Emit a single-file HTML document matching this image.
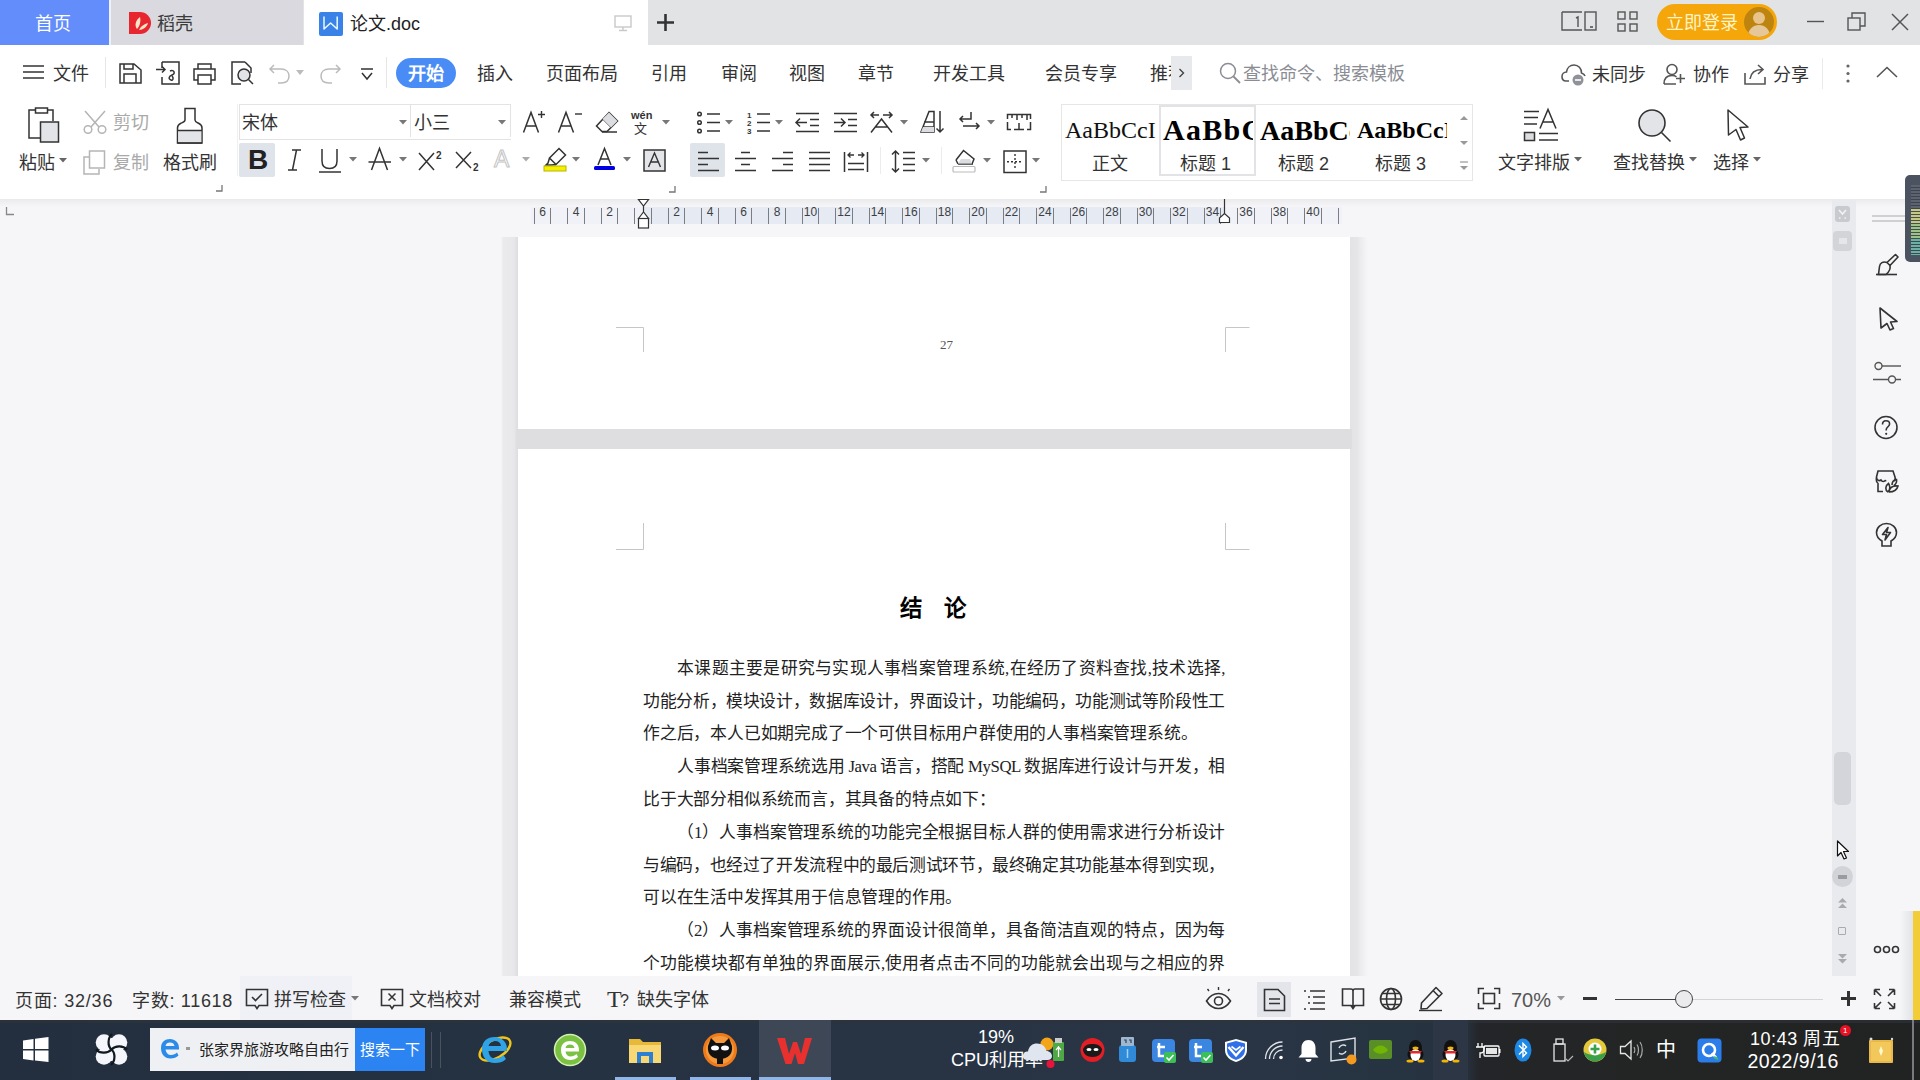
<!DOCTYPE html>
<html lang="zh-CN"><head><meta charset="utf-8">
<style>
*{box-sizing:border-box;margin:0;padding:0}
html,body{width:1920px;height:1080px;overflow:hidden;background:#f3f4f7;font-family:"Liberation Sans",sans-serif;color:#333}
.a{position:absolute}
.t{position:absolute;white-space:nowrap;line-height:1}
svg{position:absolute;overflow:visible}
.dl{position:absolute;white-space:nowrap;line-height:1;font-family:"Liberation Serif",serif;font-size:16.8px;color:#222}
</style></head><body>


<!-- TITLE BAR -->
<div class="a" style="left:0;top:0;width:1920px;height:45px;background:#e2e3e5"></div>
<div class="a" style="left:0;top:0;width:109px;height:45px;background:#628dfb"></div>
<div class="t" style="left:35px;top:15px;font-size:18px;color:#fff">首页</div>
<div class="a" style="left:109px;top:0;width:1.5px;height:45px;background:#eef2fb"></div>
<div class="a" style="left:110.5px;top:0;width:192.5px;height:45px;background:#d9d9df"></div>
<svg style="left:128px;top:11px" width="24" height="24" viewBox="0 0 24 24"><path d="M1 1 H12 A11 11 0 0 1 12 23 H1 Z" fill="#e8262f"/><path d="M9 18 C6 14 8 9 12 6 C13 10 12 15 9 18Z M11 19 C13 15 16 13 20 12 C19 16 15 19 11 19Z" fill="#fde3c8"/></svg>
<div class="t" style="left:157px;top:15px;font-size:18px;color:#3a3a3a">稻壳</div>
<div class="a" style="left:304px;top:0;width:344px;height:45px;background:#fff"></div>
<div class="a" style="left:319px;top:12px;width:24px;height:24px;background:#3b82e8;border-radius:2px"></div>
<svg style="left:319px;top:12px" width="24" height="24"><path d="M5 4.5 V17 L11.6 11 L18.2 17 V4.5" fill="none" stroke="#e8fbff" stroke-width="1.5" stroke-linejoin="round"/></svg>
<div class="t" style="left:350px;top:15px;font-size:18px;color:#222">论文.doc</div>
<svg style="left:614px;top:15px" width="18" height="17"><rect x="1" y="1" width="16" height="11" fill="none" stroke="#c8c9cc" stroke-width="1.4"/><path d="M9 12 V15 M5 15.5 H13" stroke="#c8c9cc" stroke-width="1.4"/></svg>
<svg style="left:656px;top:13px" width="19" height="19"><path d="M9.5 1 V18 M1 9.5 H18" stroke="#333" stroke-width="2.6"/></svg>
<!-- right title icons -->
<svg style="left:1561px;top:10px" width="36" height="22"><path d="M1 2 H21 M1 2 V20 H21" fill="none" stroke="#555" stroke-width="1.4"/><rect x="24" y="2" width="11" height="18" fill="none" stroke="#555" stroke-width="1.4"/><path d="M15 8 L17 7 V17" fill="none" stroke="#555" stroke-width="1.4"/><path d="M29 17 H32" stroke="#555" stroke-width="1.6"/></svg>
<svg style="left:1617px;top:11px" width="21" height="21"><rect x="1" y="1" width="7" height="7" fill="none" stroke="#555" stroke-width="1.4"/><rect x="13" y="1" width="7" height="7" fill="none" stroke="#555" stroke-width="1.4"/><rect x="1" y="13" width="7" height="7" fill="none" stroke="#555" stroke-width="1.4"/><rect x="13" y="13" width="7" height="7" fill="none" stroke="#555" stroke-width="1.4"/></svg>
<div class="a" style="left:1657px;top:4px;width:120px;height:36px;border-radius:18px;background:#f4a60b"></div>
<div class="t" style="left:1666px;top:14px;font-size:18px;color:#fff4c4">立即登录</div>
<div class="a" style="left:1744px;top:7px;width:30px;height:30px;border-radius:15px;background:#bd840f;overflow:hidden"><div class="a" style="left:9px;top:5px;width:12px;height:12px;border-radius:6px;background:#e8c48a"></div><div class="a" style="left:4px;top:18px;width:22px;height:16px;border-radius:11px 11px 0 0;background:#e6c79a"></div></div>
<svg style="left:1807px;top:20px" width="17" height="3"><path d="M0 1.5 H17" stroke="#555" stroke-width="1.4"/></svg>
<svg style="left:1847px;top:12px" width="19" height="19"><rect x="1" y="6" width="12" height="12" fill="none" stroke="#555" stroke-width="1.4"/><path d="M5 6 V1 H18 V14 H13" fill="none" stroke="#555" stroke-width="1.4"/></svg>
<svg style="left:1891px;top:13px" width="18" height="18"><path d="M1 1 L17 17 M17 1 L1 17" stroke="#555" stroke-width="1.5"/></svg>


<!-- MENU BAR -->
<div class="a" style="left:0;top:45px;width:1920px;height:154px;background:#fff"></div>
<svg style="left:23px;top:65px" width="21" height="14"><path d="M0 1 H21 M0 7 H21 M0 13 H21" stroke="#333" stroke-width="1.5" fill="none"/></svg>
<div class="t" style="left:53px;top:65px;font-size:18px;color:#333">文件</div>
<div class="a" style="left:105px;top:57px;width:1px;height:31px;background:#e6e6e6"></div>
<svg style="left:119px;top:63px" width="23" height="21"><path d="M1 1 H15 L22 7 V20 H1 Z M5 1 V6 H14 V1 M5 20 V11 H17 V20" stroke="#333" stroke-width="1.5" fill="none"/></svg>
<svg style="left:156px;top:61px" width="24" height="24"><path d="M6 1 H23 V23 H6 V16 M6 1 V7" stroke="#333" stroke-width="1.5" fill="none"/><path d="M0 8.5 H9 M6 5.5 L9 8.5 L6 11.5" stroke="#333" stroke-width="1.5" fill="none"/><path d="M14 10 C18 8 20 13 16 14 C13 15 12 18 15 19 C17 20 18 17 16 15" stroke="#333" stroke-width="1.5" fill="none"/></svg>
<svg style="left:193px;top:63px" width="23" height="22"><path d="M5 6 V1 H18 V6 M5 17 H1 V6 H22 V17 H18 M5 12 H18 V21 H5 Z" stroke="#333" stroke-width="1.5" fill="none"/></svg>
<svg style="left:231px;top:61px" width="23" height="24"><path d="M14 1 H1 V23 H10 M14 1 L20 7 V12" stroke="#333" stroke-width="1.5" fill="none"/><circle cx="13" cy="14" r="6" fill="#e2e3e7" stroke="#333" stroke-width="1.5"/><path d="M17.5 18.5 L22 23" stroke="#333" stroke-width="1.5" fill="none"/></svg>
<svg style="left:269px;top:63px" width="22" height="22"><path d="M5 2 L1 6 L5 10 M1 6 H12 C17 6 20 9 20 13 C20 18 17 20 12 20 H9" fill="none" stroke="#bbb" stroke-width="1.5"/></svg>
<svg style="left:296px;top:70px" width="8" height="5"><path d="M0 0 H8 L4 5 Z" fill="#bbb"/></svg>
<svg style="left:319px;top:63px" width="22" height="22"><path d="M17 2 L21 6 L17 10 M21 6 H10 C5 6 2 9 2 13 C2 18 5 20 10 20 H13" fill="none" stroke="#bbb" stroke-width="1.5"/></svg>
<svg style="left:360px;top:68px" width="14" height="13"><path d="M1 1 H13 M2 5 L7 11 L12 5" stroke="#333" stroke-width="1.5" fill="none"/></svg>
<div class="a" style="left:386px;top:57px;width:1px;height:31px;background:#e6e6e6"></div>
<div class="a" style="left:396px;top:58px;width:60px;height:30px;border-radius:15px;background:#4a8cf5"></div>
<div class="t" style="left:408px;top:65px;font-size:18px;color:#fff;font-weight:bold">开始</div>
<div class="t" style="left:477px;top:65px;font-size:18px;color:#333">插入</div>
<div class="t" style="left:546px;top:65px;font-size:18px;color:#333">页面布局</div>
<div class="t" style="left:651px;top:65px;font-size:18px;color:#333">引用</div>
<div class="t" style="left:721px;top:65px;font-size:18px;color:#333">审阅</div>
<div class="t" style="left:789px;top:65px;font-size:18px;color:#333">视图</div>
<div class="t" style="left:858px;top:65px;font-size:18px;color:#333">章节</div>
<div class="t" style="left:933px;top:65px;font-size:18px;color:#333">开发工具</div>
<div class="t" style="left:1045px;top:65px;font-size:18px;color:#333">会员专享</div>
<div class="a" style="left:1150px;top:62px;width:21px;height:22px;overflow:hidden"><div class="t" style="left:0;top:3px;font-size:18px;color:#333">推荐</div></div>
<div class="a" style="left:1171px;top:56px;width:21px;height:34px;background:#e8e9ec"></div>
<svg style="left:1178px;top:68px" width="7" height="10"><path d="M1.5 1 L5.5 5 L1.5 9" fill="none" stroke="#444" stroke-width="1.4"/></svg>
<svg style="left:1219px;top:62px" width="22" height="22"><circle cx="9" cy="9" r="7.5" fill="none" stroke="#8a8d94" stroke-width="1.5"/><path d="M14.5 14.5 L21 21" stroke="#8a8d94" stroke-width="1.8"/></svg>
<div class="t" style="left:1243px;top:65px;font-size:18px;color:#8a8d94">查找命令、搜索模板</div>
<svg style="left:1561px;top:63px" width="26" height="23"><path d="M8 18 H5 C2 18 1 16 1 13.5 C1 11 3 9 5.5 9 C6 5 9 2 13 2 C17.5 2 20.5 5.5 20.5 10 C22 10.5 23.5 11.5 24 13" fill="none" stroke="#555" stroke-width="1.6"/><circle cx="17" cy="17" r="5.5" fill="#8f9299"/><path d="M14 17 H20" stroke="#fff" stroke-width="1.6"/></svg>
<div class="t" style="left:1592px;top:66px;font-size:18px;color:#333">未同步</div>
<svg style="left:1663px;top:63px" width="22" height="22"><circle cx="9" cy="6.5" r="5" fill="none" stroke="#555" stroke-width="1.6"/><path d="M1 21 C1 15 4 12.5 9 12.5 C11 12.5 12.5 13 13.5 13.8 M1 21 H13" fill="none" stroke="#555" stroke-width="1.6"/><path d="M17.5 11 V20 M13 15.5 H22" stroke="#555" stroke-width="1.6"/></svg>
<div class="t" style="left:1693px;top:66px;font-size:18px;color:#333">协作</div>
<svg style="left:1744px;top:63px" width="22" height="22"><path d="M1 10 V21 H21 V14" fill="none" stroke="#555" stroke-width="1.6"/><path d="M6 16 C7 9 11 6.5 18 6.5 M14 2 L19 6.5 L14 11" fill="none" stroke="#555" stroke-width="1.6"/></svg>
<div class="t" style="left:1773px;top:66px;font-size:18px;color:#333">分享</div>
<div class="a" style="left:1822px;top:58px;width:1px;height:31px;background:#eaeaea"></div>
<svg style="left:1846px;top:64px" width="4" height="19"><circle cx="2" cy="2" r="1.6" fill="#666"/><circle cx="2" cy="9.5" r="1.6" fill="#666"/><circle cx="2" cy="17" r="1.6" fill="#666"/></svg>
<svg style="left:1876px;top:66px" width="22" height="12"><path d="M1 11 L11 1.5 L21 11" fill="none" stroke="#555" stroke-width="1.6"/></svg>


<!-- RIBBON -->
<svg style="left:27px;top:107px" width="34" height="36"><path d="M9 3 H2 V31 H13" stroke="#333" stroke-width="1.5" fill="none"/><path d="M20 3 H26 V14" stroke="#333" stroke-width="1.5" fill="none"/><rect x="8.5" y="1" width="12" height="5" stroke="#333" stroke-width="1.5" fill="none"/><rect x="13.5" y="15" width="18" height="20" fill="#e3e4e8" stroke="#333" stroke-width="1.5"/></svg>
<div class="t" style="left:19px;top:154px;font-size:18px;color:#333">粘贴</div>
<svg style="left:59px;top:158px" width="8" height="5"><path d="M0 0 H8 L4 4.5 Z" fill="#666"/></svg>
<svg style="left:82px;top:110px" width="26" height="24"><path d="M3 1 L17 17 M23 1 L9 17" stroke="#b5b5b5" stroke-width="1.5" fill="none"/><circle cx="6" cy="19.5" r="3.8" stroke="#b5b5b5" stroke-width="1.5" fill="none"/><circle cx="20" cy="19.5" r="3.8" stroke="#b5b5b5" stroke-width="1.5" fill="none"/></svg>
<div class="t" style="left:113px;top:114px;font-size:18px;color:#a9a9a9">剪切</div>
<svg style="left:83px;top:150px" width="23" height="25"><path d="M6 7 H1 V24 H16 V19" stroke="#b5b5b5" stroke-width="1.5" fill="none"/><rect x="6.5" y="1" width="15" height="17" stroke="#b5b5b5" stroke-width="1.5" fill="none"/></svg>
<div class="t" style="left:113px;top:154px;font-size:18px;color:#a9a9a9">复制</div>
<svg style="left:176px;top:107px" width="28" height="38"><path d="M9 1.5 H19 V13 C19 15 21 15.5 23 16.5 C25 17.5 26 19 26 21 V36 H1.5 V21 C1.5 19 2.5 17.5 4.5 16.5 C6.5 15.5 9 15 9 13 Z" fill="none" stroke="#333" stroke-width="1.5"/><rect x="2.25" y="24" width="23" height="11.25" fill="#e3e4e8"/><path d="M1.5 23.5 H26 M1.5 36 H26" stroke="#333" stroke-width="1.5" fill="none"/></svg>
<div class="t" style="left:163px;top:154px;font-size:18px;color:#333">格式刷</div>
<svg style="left:216px;top:185px" width="7" height="7"><path d="M6 0 V6 H0" fill="none" stroke="#777" stroke-width="1.3"/></svg>
<div class="a" style="left:237px;top:104px;width:1px;height:72px;background:#f0f0f0"></div>
<!-- font boxes -->
<div class="a" style="left:239px;top:104px;width:272px;height:36px;border:1px solid #e3e3e3;border-right:none"></div>
<div class="a" style="left:410px;top:104px;width:1px;height:33px;background:#e3e3e3"></div>
<div class="t" style="left:242px;top:114px;font-size:18px;color:#333">宋体</div>
<svg style="left:399px;top:120px" width="8" height="5"><path d="M0 0 H8 L4 4.5 Z" fill="#777"/></svg>
<div class="t" style="left:414px;top:114px;font-size:18px;color:#333">小三</div>
<svg style="left:498px;top:120px" width="8" height="5"><path d="M0 0 H8 L4 4.5 Z" fill="#777"/></svg>
<div class="a" style="left:510px;top:104px;width:1px;height:33px;background:#e3e3e3"></div>
<!-- A+ A- eraser wen -->
<svg style="left:522px;top:110px" width="24" height="24"><path d="M1.5 22.5 L9 2.5 L16.5 22.5 M4 16 H14" stroke="#333" stroke-width="1.5" fill="none"/><path d="M19.5 1 V8 M16 4.5 H23" stroke="#333" stroke-width="1.4"/></svg>
<svg style="left:557px;top:110px" width="26" height="24"><path d="M1.5 22.5 L9 2.5 L16.5 22.5 M4 16 H14" stroke="#333" stroke-width="1.5" fill="none"/><path d="M18 4 H25" stroke="#333" stroke-width="1.4"/></svg>
<svg style="left:595px;top:111px" width="24" height="23"><path d="M14 1.5 L22.5 10 L12 20.5 H7 L1.5 15 Z" stroke="#333" stroke-width="1.5" fill="none"/><path d="M8 8 L16 16" stroke="#333" stroke-width="1.5" fill="none"/><path d="M14 1.5 L22.5 10 L16 16.5 L7.5 8 Z" fill="#dcdde0"/><path d="M7 21 H22" stroke="#333" stroke-width="1.5" fill="none"/></svg>
<div class="t" style="left:631px;top:110px;font-size:11px;color:#333;font-weight:bold;letter-spacing:0">wén</div>
<div class="t" style="left:634px;top:122px;font-size:13px;color:#333">文</div>
<svg style="left:662px;top:120px" width="8" height="5"><path d="M0 0 H8 L4 4.5 Z" fill="#777"/></svg>
<!-- row2 -->
<div class="a" style="left:239px;top:143px;width:36px;height:34px;background:#dfe3ea;border-radius:2px"></div>
<div class="t" style="left:248px;top:146px;font-size:28px;color:#222;font-weight:bold">B</div>
<svg style="left:287px;top:149px" width="15" height="22"><path d="M5 1 H14 M1 21 H10 M9.5 1 L5.5 21" stroke="#333" stroke-width="1.5" fill="none"/></svg>
<svg style="left:318px;top:148px" width="25" height="25"><path d="M4 1 V13 C4 18 7 20.5 11.5 20.5 C16 20.5 19 18 19 13 V1" stroke="#333" stroke-width="1.5" fill="none"/><path d="M1 24 H23" stroke="#333" stroke-width="1.5"/></svg>
<svg style="left:349px;top:157px" width="8" height="5"><path d="M0 0 H8 L4 4.5 Z" fill="#777"/></svg>
<svg style="left:368px;top:147px" width="24" height="25"><path d="M3.5 23 L11.5 1.5 L19.5 23" stroke="#333" stroke-width="1.5" fill="none"/><path d="M0.5 15 H23" stroke="#333" stroke-width="1.5" fill="none"/></svg>
<svg style="left:399px;top:157px" width="8" height="5"><path d="M0 0 H8 L4 4.5 Z" fill="#777"/></svg>
<svg style="left:418px;top:150px" width="26" height="21"><path d="M1 3 L16 20 M16 3 L1 20" stroke="#333" stroke-width="1.5" fill="none"/><text x="18" y="9" font-size="10" font-weight="bold" fill="#333" font-family="Liberation Sans">2</text></svg>
<svg style="left:455px;top:151px" width="28" height="21"><path d="M1 1 L16 17 M16 1 L1 17" stroke="#333" stroke-width="1.5" fill="none"/><text x="18" y="20" font-size="10" font-weight="bold" fill="#333" font-family="Liberation Sans">2</text></svg>
<div class="t" style="left:494px;top:148px;font-size:23px;color:#fff;-webkit-text-stroke:1px #c4c4c4">A</div>
<svg style="left:522px;top:157px" width="8" height="5"><path d="M0 0 H8 L4 4.5 Z" fill="#aaa"/></svg>
<svg style="left:543px;top:147px" width="26" height="25"><path d="M16 1.5 L22.5 8 L13 17.5 L6.5 11 Z M6.5 11 L5 16 L3 18 H8 L13 17.5" stroke="#333" stroke-width="1.5" fill="none"/><rect x="1" y="19" width="22" height="5" fill="#f5f000" stroke="#b9b500" stroke-width="1"/></svg>
<svg style="left:572px;top:157px" width="8" height="5"><path d="M0 0 H8 L4 4.5 Z" fill="#777"/></svg>
<svg style="left:593px;top:147px" width="23" height="24"><path d="M5 18 L11.5 1.5 L18 18 M7.5 12 H15.5" stroke="#333" stroke-width="1.5" fill="none"/><rect x="1" y="19" width="21" height="4" rx="1.5" fill="#0000e0"/></svg>
<svg style="left:623px;top:157px" width="8" height="5"><path d="M0 0 H8 L4 4.5 Z" fill="#777"/></svg>
<svg style="left:643px;top:149px" width="24" height="23"><rect x="1" y="1" width="21" height="21" fill="#e4e5e8" stroke="#333" stroke-width="1.5"/><path d="M5.5 18 L11.5 4 L17.5 18 M7.5 13 H15.5" stroke="#333" stroke-width="1.4" fill="none"/></svg>
<svg style="left:669px;top:186px" width="7" height="7"><path d="M6 0 V6 H0" fill="none" stroke="#777" stroke-width="1.3"/></svg>
<!-- paragraph group -->
<svg style="left:697px;top:111px" width="25" height="23"><circle cx="2.5" cy="3" r="1.8" stroke="#333" stroke-width="1.5" fill="none"/><circle cx="2.5" cy="11.5" r="1.8" stroke="#333" stroke-width="1.5" fill="none"/><circle cx="2.5" cy="20" r="1.8" stroke="#333" stroke-width="1.5" fill="none"/><path d="M10 3 H23 M10 11.5 H23 M10 20 H23" stroke="#333" stroke-width="1.5" fill="none"/></svg>
<svg style="left:725px;top:120px" width="8" height="5"><path d="M0 0 H8 L4 4.5 Z" fill="#777"/></svg>
<svg style="left:746px;top:110px" width="26" height="24"><text x="1" y="8" font-size="8" font-weight="bold" fill="#333" font-family="Liberation Sans">1</text><text x="1" y="16" font-size="8" font-weight="bold" fill="#333" font-family="Liberation Sans">2</text><text x="1" y="24" font-size="8" font-weight="bold" fill="#333" font-family="Liberation Sans">3</text><path d="M11 4 H24 M11 12.5 H24 M11 21 H24" stroke="#333" stroke-width="1.5" fill="none"/></svg>
<svg style="left:775px;top:120px" width="8" height="5"><path d="M0 0 H8 L4 4.5 Z" fill="#777"/></svg>
<svg style="left:795px;top:112px" width="26" height="21"><path d="M1 1.5 H24 M15 7.5 H24 M15 13.5 H24 M1 19.5 H24" stroke="#333" stroke-width="1.5" fill="none"/><path d="M1 10.5 H12 M5 6.5 L1 10.5 L5 14.5" stroke="#333" stroke-width="1.5" fill="none"/></svg>
<svg style="left:833px;top:112px" width="26" height="21"><path d="M1 1.5 H24 M15 7.5 H24 M15 13.5 H24 M1 19.5 H24" stroke="#333" stroke-width="1.5" fill="none"/><path d="M1 10.5 H12 M8 6.5 L12 10.5 L8 14.5" stroke="#333" stroke-width="1.5" fill="none"/></svg>
<svg style="left:869px;top:110px" width="26" height="24"><path d="M2 5 H10 M5 2 L2 5 L5 8 M14 5 H23 M20 2 L23 5 L20 8" stroke="#333" stroke-width="1.5" fill="none"/><path d="M2 22.5 L12.5 9 L23 22.5 M6 17 H19" stroke="#333" stroke-width="1.5" fill="none"/></svg>
<svg style="left:900px;top:120px" width="8" height="5"><path d="M0 0 H8 L4 4.5 Z" fill="#777"/></svg>
<svg style="left:920px;top:110px" width="25" height="24"><path d="M1 22 L9 1.5 H14 V22 Z M4 12 H14 M3 17 H14" stroke="#333" stroke-width="1.5" fill="none"/><path d="M3 17 H14 V22 H1 Z" fill="#dcdde0"/><path d="M20 1 V22 M16.5 18.5 L20 22 L23.5 18.5" stroke="#333" stroke-width="1.5" fill="none"/></svg>
<svg style="left:958px;top:111px" width="23" height="22"><path d="M13 1 V8 H2 M5 5 L2 8 L5 11" stroke="#333" stroke-width="1.5" fill="none"/><path d="M5 15 H21 M18 12 L21 15 L18 18" stroke="#333" stroke-width="1.5" fill="none"/></svg>
<svg style="left:987px;top:120px" width="8" height="5"><path d="M0 0 H8 L4 4.5 Z" fill="#777"/></svg>
<svg style="left:1006px;top:113px" width="26" height="18"><path d="M1.5 6 V1.5 H24.5 V6 M1.5 9 V16.5 H5 M8 16.5 H18 M21 16.5 H24.5 V9 M6 1.5 V5 M11 1.5 V7 M16 1.5 V5 M21 1.5 V7 M13 10 V16.5" stroke="#333" stroke-width="1.5" fill="none"/></svg>
<!-- row2 paragraph -->
<div class="a" style="left:690px;top:143px;width:35px;height:34px;background:#dfe3ea;border-radius:2px"></div>
<svg style="left:697px;top:151px" width="23" height="22"><path d="M1 1.5 H11 M1 7.5 H22 M1 13.5 H11 M1 19.5 H22" stroke="#333" stroke-width="1.6"/></svg>
<svg style="left:734px;top:151px" width="23" height="22"><path d="M7 1.5 H16 M1 7.5 H22 M7 13.5 H16 M1 19.5 H22" stroke="#333" stroke-width="1.6"/></svg>
<svg style="left:771px;top:151px" width="23" height="22"><path d="M12 1.5 H22 M1 7.5 H22 M12 13.5 H22 M1 19.5 H22" stroke="#333" stroke-width="1.6"/></svg>
<svg style="left:808px;top:151px" width="23" height="22"><path d="M1 1.5 H22 M1 7.5 H22 M1 13.5 H22 M1 19.5 H22" stroke="#333" stroke-width="1.6"/></svg>
<svg style="left:843px;top:151px" width="26" height="22"><path d="M1.5 1 V21 M24.5 1 V21 M5 12.5 H21 M5 18.5 H21" stroke="#333" stroke-width="1.5" fill="none"/><path d="M5 4 H11 M7.5 1.5 L5 4 L7.5 6.5 M15 4 H21 M18.5 1.5 L21 4 L18.5 6.5" stroke="#333" stroke-width="1.3" fill="none"/></svg>
<div class="a" style="left:880px;top:147px;width:1px;height:27px;background:#ececec"></div>
<svg style="left:890px;top:150px" width="26" height="23"><path d="M5.5 1 V22 M2 4.5 L5.5 1 L9 4.5 M2 18.5 L5.5 22 L9 18.5" stroke="#333" stroke-width="1.5" fill="none"/><path d="M13 2.5 H25 M13 8.5 H25 M13 14.5 H25 M13 20.5 H25" stroke="#333" stroke-width="1.5" fill="none"/></svg>
<svg style="left:922px;top:158px" width="8" height="5"><path d="M0 0 H8 L4 4.5 Z" fill="#777"/></svg>
<div class="a" style="left:941px;top:147px;width:1px;height:27px;background:#ececec"></div>
<svg style="left:952px;top:149px" width="25" height="24"><path d="M4 11 L11.5 1.5 L22 10 L20 15" stroke="#333" stroke-width="1.5" fill="none"/><path d="M6 15 L4 11 M6 15 H21" stroke="#333" stroke-width="1.5" fill="none"/><path d="M6 14.5 H20 L18 10 H9 Z" fill="#dcdde0"/><rect x="1" y="17.5" width="22" height="5.5" rx="1" fill="none" stroke="#bbb" stroke-width="1.2"/></svg>
<svg style="left:983px;top:158px" width="8" height="5"><path d="M0 0 H8 L4 4.5 Z" fill="#777"/></svg>
<svg style="left:1003px;top:150px" width="24" height="23"><rect x="1" y="1" width="22" height="21.5" stroke="#333" stroke-width="1.5" fill="none"/><path d="M12 4 V19.5 M4 11.75 H20" stroke="#333" stroke-width="1.4" stroke-dasharray="2 2"/></svg>
<svg style="left:1032px;top:158px" width="8" height="5"><path d="M0 0 H8 L4 4.5 Z" fill="#777"/></svg>
<svg style="left:1040px;top:186px" width="7" height="7"><path d="M6 0 V6 H0" fill="none" stroke="#777" stroke-width="1.3"/></svg>
<!-- style gallery -->
<div class="a" style="left:1061px;top:104px;width:412px;height:77px;border:1px solid #e6e6e6"></div>
<div class="a" style="left:1159px;top:105px;width:97px;height:71px;border:2px solid #e2e3e6"></div>
<div class="a" style="left:1064px;top:113px;width:92px;height:30px;overflow:hidden"><div class="t" style="left:1px;top:5px;font-family:'Liberation Serif',serif;font-size:24px;color:#111">AaBbCcI</div></div>
<div class="t" style="left:1092px;top:155px;font-size:18px;color:#333">正文</div>
<div class="a" style="left:1162px;top:108px;width:91px;height:36px;overflow:hidden"><div class="t" style="left:1px;top:7px;font-family:'Liberation Serif',serif;font-size:30px;font-weight:bold;color:#000;letter-spacing:1.3px">AaBbCc</div></div>
<div class="t" style="left:1180px;top:155px;font-size:18px;color:#333">标题 1</div>
<div class="a" style="left:1259px;top:110px;width:91px;height:34px;overflow:hidden"><div class="t" style="left:1px;top:6.5px;font-family:'Liberation Serif',serif;font-size:28px;font-weight:bold;color:#000">AaBbCc</div></div>
<div class="t" style="left:1278px;top:155px;font-size:18px;color:#333">标题 2</div>
<div class="a" style="left:1356px;top:113px;width:91px;height:30px;overflow:hidden"><div class="t" style="left:1px;top:5px;font-family:'Liberation Serif',serif;font-size:24px;font-weight:bold;color:#000">AaBbCcI</div></div>
<div class="t" style="left:1375px;top:155px;font-size:18px;color:#333">标题 3</div>
<svg style="left:1459px;top:114px" width="10" height="60"><path d="M1 6 L5 2 L9 6 Z" fill="#999"/><path d="M1 27 L5 31 L9 27 Z" fill="#999"/><path d="M1 48 H9" stroke="#999" stroke-width="1.2"/><path d="M1 52 L5 56 L9 52 Z" fill="#999"/></svg>
<!-- right big buttons -->
<svg style="left:1522px;top:108px" width="38" height="34"><path d="M2 3.5 H17 M2 9.5 H16 M2 16 H15" stroke="#333" stroke-width="1.5" fill="none"/><path d="M18 20.5 L26 1.5 L34 20.5 M21 14 H31" stroke="#333" stroke-width="1.5" fill="none"/><rect x="2.5" y="24.5" width="10" height="8" fill="#dcdde0" stroke="#333" stroke-width="1.5"/><path d="M17 25.5 H36 M17 32 H36" stroke="#333" stroke-width="1.5" fill="none"/></svg>
<div class="t" style="left:1498px;top:154px;font-size:18px;color:#333">文字排版</div>
<svg style="left:1574px;top:157px" width="8" height="5"><path d="M0 0 H8 L4 4.5 Z" fill="#666"/></svg>
<svg style="left:1637px;top:108px" width="36" height="36"><circle cx="15" cy="15" r="13" fill="#e3e4e8" stroke="#333" stroke-width="1.6"/><path d="M24.5 24.5 L33.5 33.5" stroke="#333" stroke-width="1.6"/></svg>
<div class="t" style="left:1613px;top:154px;font-size:18px;color:#333">查找替换</div>
<svg style="left:1689px;top:157px" width="8" height="5"><path d="M0 0 H8 L4 4.5 Z" fill="#666"/></svg>
<svg style="left:1726px;top:108px" width="24" height="35"><path d="M2 2 L22 19 L14 19.5 L18.5 30 L14.5 32 L10 21.5 L2.5 27 Z" fill="none" stroke="#333" stroke-width="1.5" stroke-linejoin="round"/></svg>
<div class="t" style="left:1713px;top:154px;font-size:18px;color:#333">选择</div>
<svg style="left:1753px;top:157px" width="8" height="5"><path d="M0 0 H8 L4 4.5 Z" fill="#666"/></svg>


<!-- RULER / DOC AREA -->
<div class="a" style="left:0;top:199px;width:1920px;height:781px;background:#f6f6f8"></div>
<div class="a" style="left:0;top:199px;width:1920px;height:8px;background:linear-gradient(#eaeaed,#f6f6f8)"></div>
<svg style="left:5px;top:207px" width="9" height="9"><path d="M1.5 0 V7.5 H9" fill="none" stroke="#888" stroke-width="1.3"/></svg>
<div class="a" style="left:531px;top:207px;width:811px;height:17px;background:#f0f2f7"></div>
<div class="a" style="left:643px;top:207px;width:582px;height:17px;background:#e6eaf3"></div>
<div class="a" style="left:533.6px;top:208px;width:1px;height:16px;background:#7a7d83"></div><div class="a" style="left:550.4px;top:208px;width:1px;height:16px;background:#7a7d83"></div><div class="a" style="left:567.1px;top:208px;width:1px;height:16px;background:#7a7d83"></div><div class="a" style="left:583.9px;top:208px;width:1px;height:16px;background:#7a7d83"></div><div class="a" style="left:600.6px;top:208px;width:1px;height:16px;background:#7a7d83"></div><div class="a" style="left:617.4px;top:208px;width:1px;height:16px;background:#7a7d83"></div><div class="a" style="left:634.1px;top:208px;width:1px;height:16px;background:#7a7d83"></div><div class="a" style="left:650.9px;top:208px;width:1px;height:16px;background:#7a7d83"></div><div class="a" style="left:667.6px;top:208px;width:1px;height:16px;background:#7a7d83"></div><div class="a" style="left:684.4px;top:208px;width:1px;height:16px;background:#7a7d83"></div><div class="a" style="left:701.1px;top:208px;width:1px;height:16px;background:#7a7d83"></div><div class="a" style="left:717.9px;top:208px;width:1px;height:16px;background:#7a7d83"></div><div class="a" style="left:734.6px;top:208px;width:1px;height:16px;background:#7a7d83"></div><div class="a" style="left:751.4px;top:208px;width:1px;height:16px;background:#7a7d83"></div><div class="a" style="left:768.1px;top:208px;width:1px;height:16px;background:#7a7d83"></div><div class="a" style="left:784.9px;top:208px;width:1px;height:16px;background:#7a7d83"></div><div class="a" style="left:801.6px;top:208px;width:1px;height:16px;background:#7a7d83"></div><div class="a" style="left:818.4px;top:208px;width:1px;height:16px;background:#7a7d83"></div><div class="a" style="left:835.1px;top:208px;width:1px;height:16px;background:#7a7d83"></div><div class="a" style="left:851.9px;top:208px;width:1px;height:16px;background:#7a7d83"></div><div class="a" style="left:868.6px;top:208px;width:1px;height:16px;background:#7a7d83"></div><div class="a" style="left:885.4px;top:208px;width:1px;height:16px;background:#7a7d83"></div><div class="a" style="left:902.1px;top:208px;width:1px;height:16px;background:#7a7d83"></div><div class="a" style="left:918.9px;top:208px;width:1px;height:16px;background:#7a7d83"></div><div class="a" style="left:935.6px;top:208px;width:1px;height:16px;background:#7a7d83"></div><div class="a" style="left:952.4px;top:208px;width:1px;height:16px;background:#7a7d83"></div><div class="a" style="left:969.1px;top:208px;width:1px;height:16px;background:#7a7d83"></div><div class="a" style="left:985.9px;top:208px;width:1px;height:16px;background:#7a7d83"></div><div class="a" style="left:1002.6px;top:208px;width:1px;height:16px;background:#7a7d83"></div><div class="a" style="left:1019.4px;top:208px;width:1px;height:16px;background:#7a7d83"></div><div class="a" style="left:1036.1px;top:208px;width:1px;height:16px;background:#7a7d83"></div><div class="a" style="left:1052.9px;top:208px;width:1px;height:16px;background:#7a7d83"></div><div class="a" style="left:1069.6px;top:208px;width:1px;height:16px;background:#7a7d83"></div><div class="a" style="left:1086.4px;top:208px;width:1px;height:16px;background:#7a7d83"></div><div class="a" style="left:1103.1px;top:208px;width:1px;height:16px;background:#7a7d83"></div><div class="a" style="left:1119.9px;top:208px;width:1px;height:16px;background:#7a7d83"></div><div class="a" style="left:1136.6px;top:208px;width:1px;height:16px;background:#7a7d83"></div><div class="a" style="left:1153.4px;top:208px;width:1px;height:16px;background:#7a7d83"></div><div class="a" style="left:1170.1px;top:208px;width:1px;height:16px;background:#7a7d83"></div><div class="a" style="left:1186.9px;top:208px;width:1px;height:16px;background:#7a7d83"></div><div class="a" style="left:1203.6px;top:208px;width:1px;height:16px;background:#7a7d83"></div><div class="a" style="left:1220.4px;top:208px;width:1px;height:16px;background:#7a7d83"></div><div class="a" style="left:1237.1px;top:208px;width:1px;height:16px;background:#7a7d83"></div><div class="a" style="left:1253.9px;top:208px;width:1px;height:16px;background:#7a7d83"></div><div class="a" style="left:1270.6px;top:208px;width:1px;height:16px;background:#7a7d83"></div><div class="a" style="left:1287.4px;top:208px;width:1px;height:16px;background:#7a7d83"></div><div class="a" style="left:1304.1px;top:208px;width:1px;height:16px;background:#7a7d83"></div><div class="a" style="left:1320.9px;top:208px;width:1px;height:16px;background:#7a7d83"></div><div class="a" style="left:1337.6px;top:208px;width:1px;height:16px;background:#7a7d83"></div>
<div class="t" style="left:512.5px;width:60px;text-align:center;top:206px;font-size:12px;color:#3c3f44">6</div><div class="t" style="left:546.0px;width:60px;text-align:center;top:206px;font-size:12px;color:#3c3f44">4</div><div class="t" style="left:579.5px;width:60px;text-align:center;top:206px;font-size:12px;color:#3c3f44">2</div><div class="t" style="left:646.5px;width:60px;text-align:center;top:206px;font-size:12px;color:#3c3f44">2</div><div class="t" style="left:680.0px;width:60px;text-align:center;top:206px;font-size:12px;color:#3c3f44">4</div><div class="t" style="left:713.5px;width:60px;text-align:center;top:206px;font-size:12px;color:#3c3f44">6</div><div class="t" style="left:747.0px;width:60px;text-align:center;top:206px;font-size:12px;color:#3c3f44">8</div><div class="t" style="left:780.5px;width:60px;text-align:center;top:206px;font-size:12px;color:#3c3f44">10</div><div class="t" style="left:814.0px;width:60px;text-align:center;top:206px;font-size:12px;color:#3c3f44">12</div><div class="t" style="left:847.5px;width:60px;text-align:center;top:206px;font-size:12px;color:#3c3f44">14</div><div class="t" style="left:881.0px;width:60px;text-align:center;top:206px;font-size:12px;color:#3c3f44">16</div><div class="t" style="left:914.5px;width:60px;text-align:center;top:206px;font-size:12px;color:#3c3f44">18</div><div class="t" style="left:948.0px;width:60px;text-align:center;top:206px;font-size:12px;color:#3c3f44">20</div><div class="t" style="left:981.5px;width:60px;text-align:center;top:206px;font-size:12px;color:#3c3f44">22</div><div class="t" style="left:1015.0px;width:60px;text-align:center;top:206px;font-size:12px;color:#3c3f44">24</div><div class="t" style="left:1048.5px;width:60px;text-align:center;top:206px;font-size:12px;color:#3c3f44">26</div><div class="t" style="left:1082.0px;width:60px;text-align:center;top:206px;font-size:12px;color:#3c3f44">28</div><div class="t" style="left:1115.5px;width:60px;text-align:center;top:206px;font-size:12px;color:#3c3f44">30</div><div class="t" style="left:1149.0px;width:60px;text-align:center;top:206px;font-size:12px;color:#3c3f44">32</div><div class="t" style="left:1182.5px;width:60px;text-align:center;top:206px;font-size:12px;color:#3c3f44">34</div><div class="t" style="left:1216.0px;width:60px;text-align:center;top:206px;font-size:12px;color:#3c3f44">36</div><div class="t" style="left:1249.5px;width:60px;text-align:center;top:206px;font-size:12px;color:#3c3f44">38</div><div class="t" style="left:1283.0px;width:60px;text-align:center;top:206px;font-size:12px;color:#3c3f44">40</div>
<svg style="left:636px;top:198px" width="16" height="33"><path d="M2.5 1.5 H12.5 L7.5 8 Z M7.5 8 V14 M2.5 20.5 L7.5 14 L12.5 20.5 Z" fill="#fff" stroke="#333" stroke-width="1.2"/><rect x="2.5" y="20.5" width="10" height="9.5" fill="#fff" stroke="#333" stroke-width="1.2"/></svg>
<svg style="left:1218px;top:199px" width="14" height="26"><path d="M6.5 0 V15" stroke="#333" stroke-width="1.2"/><path d="M1.5 23.5 V19 L6.5 14.5 L11.5 19 V23.5 Z" fill="#fff" stroke="#333" stroke-width="1.2"/></svg>

<!-- PAGES -->
<div class="a" style="left:501px;top:237px;width:17px;height:740px;background:linear-gradient(90deg,#f4f4f6,#eaeaed 15%,#e8e8eb 75%,#dcdde0)"></div>
<div class="a" style="left:1350px;top:237px;width:18px;height:740px;background:linear-gradient(90deg,#e3e3e6,#e6e6e9 40%,#f0f0f3 75%,#f6f6f8)"></div>
<div class="a" style="left:518px;top:237px;width:832px;height:192px;background:#fff"></div>
<div class="a" style="left:516px;top:429px;width:836px;height:20px;background:#dedee0"></div>
<div class="a" style="left:518px;top:449px;width:832px;height:530px;background:#fff"></div>
<svg style="left:615px;top:326px" width="640" height="28"><path d="M1 1.5 H28.5 V26 M634.5 1.5 H610.5 V26" fill="none" stroke="#c6c6c6" stroke-width="1"/></svg>
<div class="t" style="left:940px;top:338px;font-family:'Liberation Serif',serif;font-size:13px;color:#555">27</div>
<svg style="left:615px;top:522px" width="640" height="28"><path d="M1 27.5 H28.5 V1 M634.5 27.5 H610.5 V1" fill="none" stroke="#c6c6c6" stroke-width="1"/></svg>
<!-- DOC TEXT -->
<div class="t" style="left:900px;top:598px;font-family:'Liberation Sans',sans-serif;font-size:22.4px;font-weight:bold;color:#000">结　论</div>
<div class="dl" style="left:677px;top:660.8px;width:548px;text-align:justify;text-align-last:justify;letter-spacing:-0.45px">本课题主要是研究与实现人事档案管理系统,在经历了资料查找,技术选择,</div>
<div class="dl" style="left:643px;top:693.6px;width:582px;text-align:justify;text-align-last:justify;letter-spacing:-0.45px">功能分析，模块设计，数据库设计，界面设计，功能编码，功能测试等阶段性工</div>
<div class="dl" style="left:643px;top:726.4px;width:582px;letter-spacing:-0.2px">作之后，本人已如期完成了一个可供目标用户群使用的人事档案管理系统。</div>
<div class="dl" style="left:677px;top:759.2px;width:548px;text-align:justify;text-align-last:justify;letter-spacing:-0.45px">人事档案管理系统选用 Java 语言，搭配 MySQL 数据库进行设计与开发，相</div>
<div class="dl" style="left:643px;top:792.0px;width:582px;letter-spacing:-0.2px">比于大部分相似系统而言，其具备的特点如下：</div>
<div class="dl" style="left:677px;top:824.8px;width:548px;text-align:justify;text-align-last:justify;letter-spacing:-0.45px">（1）人事档案管理系统的功能完全根据目标人群的使用需求进行分析设计</div>
<div class="dl" style="left:643px;top:857.6px;width:582px;text-align:justify;text-align-last:justify;letter-spacing:-0.45px">与编码，也经过了开发流程中的最后测试环节，最终确定其功能基本得到实现，</div>
<div class="dl" style="left:643px;top:890.4px;width:582px;letter-spacing:-0.2px">可以在生活中发挥其用于信息管理的作用。</div>
<div class="dl" style="left:677px;top:923.2px;width:548px;text-align:justify;text-align-last:justify;letter-spacing:-0.45px">（2）人事档案管理系统的界面设计很简单，具备简洁直观的特点，因为每</div>
<div class="dl" style="left:643px;top:956.0px;width:582px;text-align:justify;text-align-last:justify;letter-spacing:-0.45px">个功能模块都有单独的界面展示,使用者点击不同的功能就会出现与之相应的界</div>


<!-- SIDEBAR -->
<div class="a" style="left:1832px;top:199px;width:24px;height:777px;background:#e9eaee"></div>
<div class="a" style="left:1835px;top:206px;width:15px;height:16px;border-radius:3px;background:#c9cacf"></div>
<svg style="left:1835px;top:206px" width="15" height="16"><path d="M4 4 L7.5 8 L11 4 M4 12 H5.5 M9.5 12 H11" stroke="#f2f2f2" stroke-width="1.6" fill="none"/></svg>
<div class="a" style="left:1833px;top:231px;width:19px;height:20px;border-radius:4px;background:#d3d4d8"></div>
<div class="a" style="left:1839px;top:238px;width:8px;height:6px;background:#e6e6ea"></div>
<div class="a" style="left:1834px;top:752px;width:17px;height:53px;border-radius:5px;background:#d4d5da"></div>
<div class="a" style="left:1832px;top:866px;width:21px;height:21px;border-radius:11px;background:#d2d3d8"></div>
<div class="a" style="left:1838px;top:875px;width:9px;height:4px;background:#9a9ba0"></div>
<svg style="left:1837px;top:897px" width="11" height="12"><path d="M1 5.5 L5.5 1 L10 5.5 Z M1 11 L5.5 6.5 L10 11 Z" fill="#a9aaae"/></svg>
<div class="a" style="left:1838px;top:927px;width:8px;height:8px;border:1.3px solid #a9aaae;border-radius:1px"></div>
<svg style="left:1837px;top:953px" width="11" height="11"><path d="M1 1 L5.5 5.5 L10 1 Z M1 6 L5.5 10.5 L10 6 Z" fill="#a9aaae"/></svg>
<svg style="left:1836px;top:840px" width="14" height="20"><path d="M1.5 1 V16 L5 12.5 L8 19 L10.5 18 L7.5 11.5 H12.5 Z" fill="#fff" stroke="#111" stroke-width="1.2" stroke-linejoin="round"/></svg>
<!-- right tool sidebar -->
<div class="a" style="left:1872px;top:215px;width:33px;height:1.5px;background:#cfd0d3"></div>
<div class="a" style="left:1872px;top:220px;width:33px;height:1.5px;background:#cfd0d3"></div>
<div class="a" style="left:1905px;top:175px;width:15px;height:87px;border-radius:5px 0 0 5px;background:#4b5260"></div>
<div class="a" style="left:1911px;top:185px;width:9px;height:70px;background:repeating-linear-gradient(#5d6470 0 1.6px,#3f4550 1.6px 3px)"></div>
<div class="a" style="left:1911px;top:209px;width:9px;height:15px;background:repeating-linear-gradient(#c3c985 0 1.6px,#4a4f4a 1.6px 3px)"></div>
<div class="a" style="left:1911px;top:224px;width:9px;height:15px;background:repeating-linear-gradient(#9ec18a 0 1.6px,#42504a 1.6px 3px)"></div>
<div class="a" style="left:1911px;top:239px;width:9px;height:16px;background:repeating-linear-gradient(#6bb0a6 0 1.6px,#3b4b4f 1.6px 3px)"></div>
<svg style="left:1875px;top:253px" width="24" height="24"><path d="M12 9.5 L20.5 1.5 L23 4 L15 12.5 Z" stroke="#333" stroke-width="1.6" fill="none" stroke-linejoin="round"/><path d="M12 9.5 C8 8 5 10 4.5 13.5 L3.5 21.5 H11 C14 19 15.5 15 15 12.5" stroke="#333" stroke-width="1.6" fill="none"/><path d="M1 21.5 H22" stroke="#333" stroke-width="1.6" fill="none"/></svg>
<svg style="left:1878px;top:306px" width="21" height="26"><path d="M2 2 L19 15.5 L12.5 16 L15.5 22.5 L12 24 L9 17.5 L3 22 Z" stroke="#333" stroke-width="1.6" fill="none" stroke-linejoin="round"/></svg>
<svg style="left:1872px;top:360px" width="30" height="26"><path d="M10 6 H29" stroke="#555" stroke-width="1.4"/><circle cx="6.5" cy="6" r="3.5" fill="#f5f6f8" stroke="#555" stroke-width="1.4"/><path d="M1 19.5 H16 M23.5 19.5 H29" stroke="#555" stroke-width="1.4"/><circle cx="20" cy="19.5" r="3.5" fill="#f5f6f8" stroke="#555" stroke-width="1.4"/></svg>
<svg style="left:1874px;top:415px" width="24" height="25"><circle cx="12" cy="12.5" r="11" stroke="#333" stroke-width="1.6" fill="none"/><path d="M8.5 9.5 C8.5 7 10 5.8 12 5.8 C14 5.8 15.6 7 15.6 9 C15.6 11.5 12.2 12 12.2 14.8 V15.5" stroke="#333" stroke-width="1.6" fill="none"/><circle cx="12.2" cy="18.8" r="1.1" fill="#333"/></svg>
<svg style="left:1875px;top:469px" width="25" height="25"><path d="M3 14 V22.5 H8 M3 14 C1 13 1 11 1.5 8 L3 2 H18 L20 8 C20.5 10 20 11.5 19 12 M1.5 8 C1.5 11 4 12.5 6 11 C7 13 9.5 13 10.5 11 V12.5" stroke="#333" stroke-width="1.6" fill="none"/><path d="M13 23 C10 21 10 17 13.5 14.5 C15.5 17.5 15.5 20 13 23 M14 23 C14.5 19 17.5 16.5 23 17 C22 21 18.5 23 14 23 M17 16 C17 13 19 11 21.5 10.5 C22 13 21 15 19 16.5" stroke="#333" stroke-width="1.6" fill="none"/></svg>
<svg style="left:1875px;top:522px" width="24" height="26"><path d="M7 19 C3.5 17 1.5 14 1.5 10.5 C1.5 5.5 6 1.5 11.5 1.5 C17 1.5 21.5 5.5 21.5 10.5 C21.5 14 19.5 17 16 19 V24 H7 Z" stroke="#333" stroke-width="1.6" fill="none"/><path d="M13 5.5 L7.5 12.5 H11.5 L10 18 L15.5 10.5 H11.5 Z" stroke="#333" stroke-width="1.6" fill="none" stroke-linejoin="round"/></svg>
<svg style="left:1873px;top:945px" width="27" height="9"><circle cx="4.5" cy="4.5" r="3" stroke="#333" stroke-width="1.6" fill="none"/><circle cx="13.5" cy="4.5" r="3" stroke="#333" stroke-width="1.6" fill="none"/><circle cx="22.5" cy="4.5" r="3" stroke="#333" stroke-width="1.6" fill="none"/></svg>


<!-- STATUS BAR -->
<div class="a" style="left:0;top:976px;width:1920px;height:44px;background:#f6f6f8"></div>
<div class="t" style="left:15px;top:992px;font-size:18px;color:#333;letter-spacing:0.8px">页面: 32/36</div>
<div class="t" style="left:132px;top:992px;font-size:18px;color:#333;letter-spacing:0.7px">字数: 11618</div>
<div class="a" style="left:240px;top:976px;width:112px;height:44px;background:#eff1f6"></div>
<svg style="left:245px;top:988px" width="24" height="22"><path d="M1.5 1.5 H22.5 V17.5 H14 L12 20.5 L10 17.5 H1.5 Z" stroke="#333" stroke-width="1.6" fill="none"/><path d="M7 9 L10.5 12.5 L17 6" stroke="#333" stroke-width="1.6" fill="none"/></svg>
<div class="t" style="left:274px;top:991px;font-size:18px;color:#333">拼写检查</div>
<svg style="left:351px;top:996px" width="8" height="5"><path d="M0 0 H8 L4 4.5 Z" fill="#777"/></svg>
<svg style="left:380px;top:988px" width="24" height="22"><path d="M1.5 1.5 H22.5 V17.5 H14 L12 20.5 L10 17.5 H1.5 Z" stroke="#333" stroke-width="1.6" fill="none"/><path d="M8.5 5.5 L15.5 12.5 M15.5 5.5 L8.5 12.5" stroke="#333" stroke-width="1.5"/></svg>
<div class="t" style="left:409px;top:991px;font-size:18px;color:#333">文档校对</div>
<div class="t" style="left:509px;top:991px;font-size:18px;color:#333">兼容模式</div>
<div class="t" style="left:607px;top:987px;font-family:'Liberation Serif',serif;font-size:24px;color:#333">T</div>
<div class="t" style="left:620px;top:993px;font-size:16px;color:#333">?</div>
<div class="t" style="left:637px;top:991px;font-size:18px;color:#333">缺失字体</div>
<svg style="left:1205px;top:986px" width="27" height="24"><path d="M4 5 L2.5 3 M13.5 4 V1 M23 5 L24.5 3" stroke="#333" stroke-width="1.4"/><path d="M1.5 15 C5 9.5 9 7.5 13.5 7.5 C18 7.5 22 9.5 25.5 15 C22 20.5 18 22.5 13.5 22.5 C9 22.5 5 20.5 1.5 15 Z" stroke="#333" stroke-width="1.6" fill="none"/><circle cx="13.5" cy="15" r="4" stroke="#333" stroke-width="1.6" fill="none"/></svg>
<div class="a" style="left:1257px;top:982px;width:34px;height:35px;background:#e3e5ea"></div>
<svg style="left:1263px;top:988px" width="23" height="24"><path d="M1.5 1.5 H15 L21.5 8 V22.5 H1.5 Z" stroke="#333" stroke-width="1.6" fill="none"/><path d="M6 11 H17 M6 15.5 H17" stroke="#333" stroke-width="1.6" fill="none"/></svg>
<svg style="left:1303px;top:989px" width="23" height="22"><path d="M1 2 H3 M7 2 H22 M5 8 H7 M10 8 H22 M5 14 H7 M10 14 H22 M1 20 H3 M7 20 H22" stroke="#333" stroke-width="1.6"/></svg>
<svg style="left:1341px;top:987px" width="24" height="25"><path d="M1.5 2 H10 C11 2 12 3 12 4 V20 C12 19 11 18.5 10 18.5 H1.5 Z M22.5 2 H14 C13 2 12 3 12 4 V20 C12 19 13 18.5 14 18.5 H22.5 Z" stroke="#333" stroke-width="1.6" fill="none"/><path d="M10 18.5 L12 21.5 L14 18.5" stroke="#333" stroke-width="1.6" fill="none"/></svg>
<svg style="left:1379px;top:987px" width="24" height="24"><circle cx="12" cy="12" r="10.5" stroke="#333" stroke-width="1.6" fill="none"/><ellipse cx="12" cy="12" rx="4.5" ry="10.5" stroke="#333" stroke-width="1.6" fill="none"/><path d="M1.5 12 H22.5 M3 6.5 H21 M3 17.5 H21" stroke="#333" stroke-width="1.4"/></svg>
<svg style="left:1418px;top:986px" width="26" height="26"><path d="M18 1.5 L24 7.5 L9 22.5 L3 23 L3.5 17 Z M15 4.5 L21 10.5" stroke="#333" stroke-width="1.6" fill="none" stroke-linejoin="round"/><path d="M1 24.5 H24" stroke="#333" stroke-width="1.4"/></svg>
<svg style="left:1477px;top:987px" width="24" height="23"><path d="M1.5 7 V1.5 H7 M17 1.5 H22.5 V7 M22.5 16 V21.5 H17 M7 21.5 H1.5 V16" stroke="#333" stroke-width="1.6" fill="none"/><rect x="6.5" y="6.5" width="11" height="10" stroke="#333" stroke-width="1.6" fill="none"/></svg>
<div class="t" style="left:1511px;top:990px;font-size:20px;color:#555">70%</div>
<svg style="left:1557px;top:996px" width="8" height="5"><path d="M0 0 H8 L4 4.5 Z" fill="#999"/></svg>
<div class="a" style="left:1583px;top:997px;width:14px;height:3px;background:#333"></div>
<div class="a" style="left:1615px;top:998.5px;width:70px;height:1.5px;background:#444"></div>
<div class="a" style="left:1685px;top:998.5px;width:138px;height:1.5px;background:#d3d4d7"></div>
<div class="a" style="left:1675px;top:990px;width:18px;height:18px;border-radius:9px;background:#ebebee;border:1.5px solid #444"></div>
<div class="a" style="left:1841px;top:997px;width:14.5px;height:3px;background:#333"></div>
<div class="a" style="left:1846.75px;top:991px;width:3px;height:15px;background:#333"></div>
<svg style="left:1873px;top:988px" width="23" height="22"><path d="M1.5 1.5 L8 8 M1.5 1.5 H7 M1.5 1.5 V7 M21.5 1.5 L15 8 M21.5 1.5 H16 M21.5 1.5 V7 M1.5 20.5 L8 14 M1.5 20.5 H7 M1.5 20.5 V15 M21.5 20.5 L15 14 M21.5 20.5 H16 M21.5 20.5 V15" stroke="#333" stroke-width="1.6" fill="none"/></svg>

<div class="a" style="left:1900px;top:911px;width:13px;height:109px;background:linear-gradient(90deg,#f5f6f8,#e2e3e6)"></div>
<div class="a" style="left:1913px;top:911px;width:7px;height:109px;background:#f3cd38"></div>
<!-- TASKBAR -->
<div class="a" style="left:0;top:1020px;width:1920px;height:60px;background:linear-gradient(90deg,#232f3e 0,#253241 545px,#283344 900px,#293545 1250px,#263340 1400px,#27313e 1466px,#232528 1480px,#232524 1690px,#212222 1920px)"></div>
<div class="a" style="left:0;top:1020px;width:1920px;height:3px;background:#2e333a;opacity:.6"></div>
<svg style="left:23px;top:1037px" width="26" height="26"><path d="M0 3.5 L10.5 2 V12 H0 Z M12 1.8 L25.5 0 V12 H12 Z M0 13.5 H10.5 V23.5 L0 22 Z M12 13.5 H25.5 V25 L12 23.5 Z" fill="#fff"/></svg>
<svg style="left:95px;top:1033px" width="33" height="33"><g fill="#f4f6fb"><circle cx="9" cy="9.5" r="8.3"/><circle cx="24" cy="9.5" r="8.3"/><circle cx="9" cy="23.5" r="8.3"/><circle cx="24" cy="23.5" r="8.3"/><rect x="5" y="5" width="23" height="23"/></g><path d="M16.5 16.5 C12.5 13 12.5 5 17 1 M16.5 16.5 C20 12.5 28 12 32 16.5 M16.5 16.5 C20.5 20 20.5 28 16 32 M16.5 16.5 C13 20.5 5 21 1 16.5" fill="none" stroke="#111820" stroke-width="2.2"/></svg>
<div class="a" style="left:150px;top:1028px;width:205px;height:43px;background:#eef0f3"></div>
<div class="a" style="left:355px;top:1028px;width:70px;height:43px;background:#2b84f2"></div>
<svg style="left:158px;top:1036px" width="24" height="24"><path d="M3 12 C3 6 7 3 12 3 C17 3 21 6.5 21 12 V13.5 H7.5 C8 17 10 19 13 19 C15.5 19 17.5 18 19 16.5 L20.5 19.5 C18.5 21.5 16 22.5 12.5 22.5 C6.5 22.5 3 18 3 12 Z M7.5 10 H16.5 C16 7.5 14.5 6.5 12 6.5 C9.5 6.5 8 7.5 7.5 10 Z" fill="#2a8ce8"/></svg>
<div class="a" style="left:186px;top:1047px;width:4px;height:3px;background:#999"></div>
<div class="t" style="left:199px;top:1042px;font-size:15px;color:#222">张家界旅游攻略自由行</div>
<div class="t" style="left:360px;top:1042px;font-size:15px;color:#fff">搜索一下</div>
<div class="a" style="left:431px;top:1032px;width:1px;height:36px;background:#4a525e"></div>
<div class="a" style="left:440px;top:1032px;width:1px;height:36px;background:#4a525e"></div>
<!-- IE -->
<svg style="left:476px;top:1032px" width="38" height="35"><ellipse cx="19" cy="17" rx="17" ry="9" transform="rotate(-30 19 17)" fill="none" stroke="#f0c419" stroke-width="2.4"/><path d="M6 17 C6 9 11.5 5 18.5 5 C26 5 31 10 31 17 V19 H12.5 C13 24 15.5 26.5 19.5 26.5 C23 26.5 25.5 25 27.5 23 L30 27 C27 30 23.5 31 19 31 C10.5 31 6 25 6 17 Z M12.5 14 H25 C24.5 10.5 22.5 9 19 9 C15.5 9 13.5 10.5 12.5 14 Z" fill="#2fa3e6"/></svg>
<!-- 360 browser -->
<svg style="left:553px;top:1033px" width="34" height="34"><circle cx="17" cy="17" r="15.5" fill="#7cc242" stroke="#d5f0b5" stroke-width="1.5"/><path d="M8 17 C8 11 12 8 17 8 C22 8 26 11 26 17 V18.5 H12.5 C13 22 15 23.5 17.5 23.5 C20 23.5 22 22.5 23.5 21 L25 24 C23 26 20.5 27 17 27 C11.5 27 8 23 8 17 Z M12.5 15 H21.5 C21 12.5 19.5 11.5 17 11.5 C14.5 11.5 13 12.5 12.5 15 Z" fill="#fff"/></svg>
<!-- folder -->
<svg style="left:628px;top:1036px" width="34" height="28"><path d="M1 3 H12 L15 6 H33 V27 H1 Z" fill="#e8b938"/><path d="M1 9 H33 V27 H1 Z" fill="#f8d775"/><path d="M9 27 V16 H25 V27 H21 V20 H13 V27 Z" fill="#2d7fd3"/></svg>
<div class="a" style="left:615px;top:1077px;width:61px;height:3px;background:#8fb6e6"></div>
<!-- cat -->
<svg style="left:702px;top:1032px" width="36" height="36"><circle cx="18" cy="18" r="17" fill="#ef7a1a"/><circle cx="18" cy="18" r="14" fill="#f59a3c"/><path d="M6 14 L9 6 L14 11 H22 L27 6 L30 14 C31 22 26 27 18 27 C10 27 5 22 6 14Z" fill="#111"/><ellipse cx="13" cy="16" rx="4" ry="2.5" fill="#fff"/><ellipse cx="23" cy="16" rx="4" ry="2.5" fill="#fff"/><rect x="15" y="26" width="6" height="6" fill="#111"/></svg>
<div class="a" style="left:690px;top:1077px;width:61px;height:3px;background:#8fb6e6"></div>
<!-- WPS -->
<div class="a" style="left:759px;top:1020px;width:72px;height:60px;background:#3d4756"></div>
<svg style="left:776px;top:1036px" width="37" height="29"><path d="M1 2 H9 L13 18 L17 6 H21 L25 18 L29 2 H36 L28 28 H22 L19 17 L15.5 28 H9.5 Z" fill="#e8312f"/></svg>
<div class="a" style="left:759px;top:1077px;width:72px;height:3px;background:#8fb6e6"></div>
<!-- CPU -->
<div class="t" style="left:978px;top:1028px;font-size:18px;color:#fff">19%</div>
<div class="t" style="left:951px;top:1051px;font-size:18px;color:#fff">CPU利用率</div>
<svg style="left:1022px;top:1034px" width="34" height="34"><circle cx="25" cy="10" r="6.5" fill="#f3a51a"/><path d="M5 26 C1.5 26 0.5 23 1 21 C1.8 18 4 17 6 17.5 C7 12 10.5 9.5 15 9.5 C20 9.5 23.5 12.5 24.5 17 C27.5 17 30 19.5 30 22 C30 24.5 28 26 25.5 26 Z" fill="#dfe6f0"/><circle cx="28.5" cy="30" r="4" fill="#e8153a"/></svg>
<svg style="left:1052px;top:1038px" width="13" height="24"><rect x="1" y="4" width="11" height="19" rx="1" fill="#4ea844"/><rect x="3" y="0" width="7" height="5" fill="#ccc"/><path d="M6.5 8 V19 M4 12 L6.5 9 L9 12" stroke="#fff" stroke-width="1.2" fill="none"/></svg>
<svg style="left:1080px;top:1037px" width="25" height="26"><circle cx="12.5" cy="13" r="12" fill="#e31e24"/><path d="M3 12 C5 8 8 7 12.5 7 C17 7 20 8 22 12 C22 17 18 20 12.5 20 C7 20 3 17 3 12Z" fill="#1a1a1a"/><ellipse cx="9" cy="12.5" rx="2.5" ry="1.5" fill="#fff"/><ellipse cx="16" cy="12.5" rx="2.5" ry="1.5" fill="#fff"/></svg>
<svg style="left:1117px;top:1037px" width="21" height="26"><rect x="2" y="8" width="17" height="17" rx="3" fill="#2f8ad8"/><rect x="4" y="0" width="13" height="9" rx="1" fill="#9db8d0"/><path d="M7 3 H9 V6 M12 3 H14 V6" stroke="#345" stroke-width="1.2" fill="none"/><path d="M10.5 12 V21" stroke="#9fd0ff" stroke-width="1.5"/></svg>
<svg style="left:1151px;top:1038px" width="26" height="26"><rect x="1" y="1" width="23" height="23" rx="4" fill="#3a86e0"/><path d="M8 5 V18 H16 M6 9 H14" stroke="#fff" stroke-width="2.5" fill="none"/><rect x="13" y="14" width="12" height="11" rx="2" fill="#3cbf58"/><path d="M15.5 19.5 L18 22 L22.5 17" stroke="#fff" stroke-width="1.6" fill="none"/></svg>
<svg style="left:1188px;top:1038px" width="26" height="26"><rect x="1" y="1" width="23" height="23" rx="4" fill="#3a86e0"/><path d="M8 5 V18 H16 M6 9 H14" stroke="#fff" stroke-width="2.5" fill="none"/><rect x="13" y="14" width="12" height="11" rx="2" fill="#3cbf58"/><path d="M15.5 19.5 L18 22 L22.5 17" stroke="#fff" stroke-width="1.6" fill="none"/></svg>
<svg style="left:1224px;top:1038px" width="24" height="25"><path d="M12 1 L23 4 V12 C23 18 18 22.5 12 24 C6 22.5 1 18 1 12 V4 Z" fill="#fff"/><path d="M12 3 L21 5.5 V12 C21 17 17 20.5 12 22 C7 20.5 3 17 3 12 V5.5 Z" fill="#2f6fe8"/><path d="M4.5 9 L12 17.5 L19.5 9" stroke="#fff" stroke-width="2.4" fill="none"/><path d="M7.5 8.5 L12 12 L16.5 8.5" stroke="#fff" stroke-width="1.6" fill="none"/></svg>
<svg style="left:1264px;top:1040px" width="20" height="20"><path d="M1.5 19 A17 17 0 0 1 18.5 2 M5.5 19 A13 13 0 0 1 18.5 6 M9.5 19 A9 9 0 0 1 18.5 10" fill="none" stroke="#dfe3e8" stroke-width="1.3"/><circle cx="17" cy="17.5" r="1.8" fill="#fff"/></svg>
<svg style="left:1297px;top:1039px" width="23" height="23"><path d="M11.5 1 C7 1 4.5 4.5 4.5 9 V15 L1.5 18.5 H21.5 L18.5 15 V9 C18.5 4.5 16 1 11.5 1 Z" fill="#fff"/><path d="M8.5 20 C8.5 22 10 23 11.5 23 C13 23 14.5 22 14.5 20 Z" fill="#fff"/></svg>
<svg style="left:1330px;top:1037px" width="28" height="28"><path d="M1 5 L25 1 V21 L1 24 Z" fill="none" stroke="#dfe3e8" stroke-width="1.4"/><path d="M9 11 C10 8 14 7 16 9 M16 14 C15 17 11 18 9 16" stroke="#dfe3e8" stroke-width="1.4" fill="none"/><circle cx="21.5" cy="22.5" r="5" fill="#f49a1f"/></svg>
<svg style="left:1368px;top:1039px" width="25" height="21"><rect x="1" y="1" width="23" height="19" rx="2" fill="#5a8f28"/><path d="M5 11 C9 5 16 5 20 11 C16 16 9 16 5 11 Z" fill="#76b900" opacity=".9"/></svg>
<svg style="left:1406px;top:1039px" width="19" height="23"><ellipse cx="9.5" cy="9" rx="6.5" ry="8" fill="#111"/><ellipse cx="9.5" cy="15.5" rx="8" ry="7" fill="#111"/><ellipse cx="9.5" cy="16" rx="5" ry="6" fill="#fff"/><path d="M3 12 H16 L14 14.5 H5 Z" fill="#e62a2a"/><ellipse cx="9.5" cy="9" rx="3" ry="1.5" fill="#f5b400"/><ellipse cx="4" cy="22" rx="3.5" ry="1.5" fill="#f5b400"/><ellipse cx="15" cy="22" rx="3.5" ry="1.5" fill="#f5b400"/></svg>
<div class="a" style="left:1433px;top:1020px;width:35px;height:60px;background:#2c3644"></div>
<svg style="left:1441px;top:1039px" width="19" height="23"><ellipse cx="9.5" cy="9" rx="6.5" ry="8" fill="#111"/><ellipse cx="9.5" cy="15.5" rx="8" ry="7" fill="#111"/><ellipse cx="9.5" cy="16" rx="5" ry="6" fill="#fff"/><path d="M3 12 H16 L14 14.5 H5 Z" fill="#e62a2a"/><ellipse cx="9.5" cy="9" rx="3" ry="1.5" fill="#f5b400"/><ellipse cx="4" cy="22" rx="3.5" ry="1.5" fill="#f5b400"/><ellipse cx="15" cy="22" rx="3.5" ry="1.5" fill="#f5b400"/></svg>
<svg style="left:1475px;top:1042px" width="26" height="17"><path d="M3 1 V5 M7 1 V5 M1 5 H9 V8 C9 10 7 11 5 11 V16" stroke="#fff" stroke-width="1.3" fill="none"/><rect x="9" y="4" width="15" height="10" rx="1" fill="none" stroke="#fff" stroke-width="1.3"/><rect x="11" y="6" width="11" height="6" fill="#e6e6e6"/><rect x="24" y="7" width="1.5" height="4" fill="#fff"/></svg>
<svg style="left:1514px;top:1038px" width="18" height="24"><ellipse cx="9" cy="12" rx="8.5" ry="11.5" fill="#1e88e5"/><path d="M5 7.5 L12.5 15 L9 18.5 V5.5 L12.5 9 L5 16.5" stroke="#fff" stroke-width="1.4" fill="none"/></svg>
<svg style="left:1552px;top:1038px" width="22" height="25"><rect x="2" y="6" width="11" height="17" fill="none" stroke="#e6e6e6" stroke-width="1.3"/><rect x="4" y="1" width="7" height="5" fill="none" stroke="#e6e6e6" stroke-width="1.3"/><path d="M14 21 L16 23 L21 18" stroke="#bbb" stroke-width="1.1" fill="none"/></svg>
<svg style="left:1583px;top:1038px" width="24" height="24"><circle cx="12" cy="12" r="11.5" fill="#e4c93a"/><path d="M1 14 C6 18 17 18 23 14 C22 20 17 23.5 12 23.5 C7 23.5 2 20 1 14 Z" fill="#3aa04a"/><circle cx="12" cy="11" r="6.5" fill="#fff"/><path d="M12 6.5 V15.5 M7.5 11 H16.5" stroke="#3aa04a" stroke-width="2.6"/></svg>
<svg style="left:1619px;top:1039px" width="24" height="22"><path d="M1.5 7.5 H6 L12 2 V20 L6 14.5 H1.5 Z" fill="none" stroke="#e6e6e6" stroke-width="1.3"/><path d="M15 8 C16 9.5 16 12.5 15 14 M18 5.5 C20 8.5 20 13.5 18 16.5 M21 3 C24 7 24 15 21 19" fill="none" stroke="#aaa" stroke-width="1.2"/></svg>
<div class="t" style="left:1656px;top:1040px;font-size:20px;color:#fff">中</div>
<svg style="left:1697px;top:1038px" width="25" height="25"><rect x="0.5" y="0.5" width="24" height="24" rx="4" fill="#2b7de9"/><circle cx="12" cy="12" r="6" fill="none" stroke="#fff" stroke-width="2.6"/><path d="M15 15 L19 19.5" stroke="#fff" stroke-width="2.6"/><path d="M17 19 L21 21" stroke="#3cc070" stroke-width="2"/></svg>
<div class="t" style="left:1750px;top:1029.5px;font-size:18px;color:#fff;letter-spacing:0.55px">10:43 周五</div>
<div class="t" style="left:1747.5px;top:1052px;font-size:19.5px;color:#fff;letter-spacing:0.5px">2022/9/16</div>
<div class="a" style="left:1840px;top:1025px;width:11px;height:11px;border-radius:6px;background:#e81123"></div>
<div class="t" style="left:1843px;top:1026.5px;font-size:8px;color:#fff">1</div>
<svg style="left:1867px;top:1036px" width="28" height="28"><rect x="2" y="4" width="24" height="23" rx="1" fill="#e9b84a"/><rect x="4" y="6" width="20" height="19" fill="#f3c85a"/><path d="M14 10 L16 15 L14 20 L12 15 Z" fill="#fff8d0"/><circle cx="4" cy="3" r="1.5" fill="#ddd"/><circle cx="25" cy="3" r="1.2" fill="#ddd"/></svg>
<div class="a" style="left:1912px;top:1020px;width:1.5px;height:60px;background:#777a80"></div>

</body></html>
